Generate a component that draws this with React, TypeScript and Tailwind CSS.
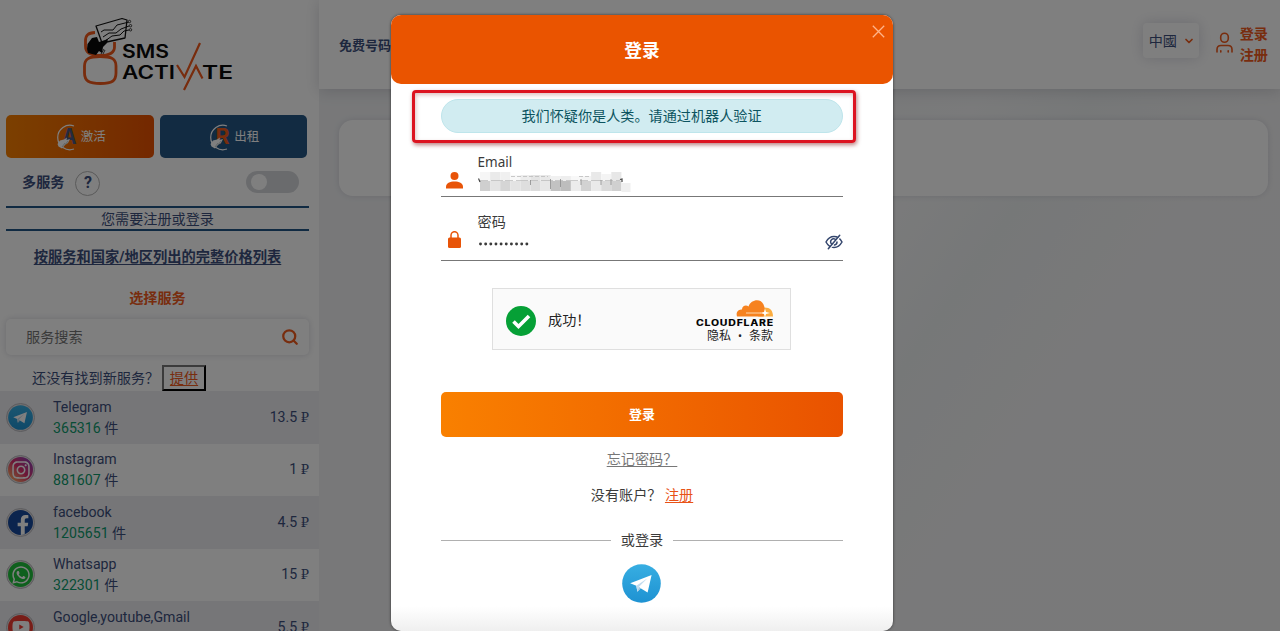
import React from "react";
import { ChevronDown, Search } from "lucide-react";
import { FaFacebookF, FaInstagram, FaWhatsapp, FaYoutube } from "react-icons/fa";

function PlaneBadge({ size }: { size: number }) {
  return (
    <svg width={size} height={size} viewBox="0 0 39 39" className="block shrink-0">
      <defs>
        <linearGradient id="plane-sky" x1="0" y1="0" x2="0" y2="1">
          <stop offset="0" stopColor="#37aee2" />
          <stop offset="1" stopColor="#1e92d2" />
        </linearGradient>
      </defs>
      <circle cx="19.5" cy="19.5" r="19.3" fill="url(#plane-sky)" />
      <path d="M8.2 19.2 29.6 11 25.6 28.6 18.6 24.2 15.4 27.8 14.3 21.8Z" fill="#fff" />
      <path d="M14.3 21.8 25.5 14.2 17 22.7 15.4 27.8Z" fill="#c3dcef" />
      <path d="M17 22.7 18.7 24.2 15.4 27.8Z" fill="#a3c6e0" />
    </svg>
  );
}

function Logo() {
  return (
    <svg width="152" height="76" viewBox="0 0 152 76" className="block" fontFamily="Inter, sans-serif">
      <g fill="none" stroke="#f0581a" strokeWidth="2.800">
        <path d="M13 15.500C6 16 3.500 18 3.500 24V29C3.500 36 8 38.500 18 38.500C28 38.500 32.500 36 32.500 30V25" />
        <path d="M18 39.500C7 39.500 2.500 42 2.500 49V56C2.500 64 7 66.500 18.500 66.500C30 66.500 34 64 34 56V49C34 42 30 39.500 18 39.500" />
      </g>
      <path d="M14 9 40 1.500 45 3 43 21 20 26Z" fill="#fff" stroke="#111" strokeWidth="1.300" strokeLinejoin="round" />
      <path d="M19 15 22 13 31 13 35 8 47 5M21 20 27 16 34 16 39 12 47 9M23 24 30 19 38 18 42 14 47 13" fill="none" stroke="#111" strokeWidth="1" />
      <g fill="#fff" stroke="#111" strokeWidth="0.800">
        <circle cx="47.500" cy="4.500" r="1.200" />
        <circle cx="48.500" cy="8.700" r="1.200" />
        <circle cx="48.500" cy="12.800" r="1.200" />
      </g>
      <path d="M5.500 27 10 21 15 20 17 25 26 22 25 26 21 30 20 36 17 34 14 38 6 36 5 32Z" fill="#080808" />
      <path d="M19 37 22 32M21 37 23 33" stroke="#111" strokeWidth="0.800" />
      <g fill="#0a0a0a" fontWeight="600" fontSize="18">
        <text x="40" y="40.500" textLength="47" lengthAdjust="spacingAndGlyphs">SMS</text>
        <text x="40" y="61.500" textLength="53" lengthAdjust="spacingAndGlyphs">ACTI</text>
        <text x="120" y="61.500" textLength="31" lengthAdjust="spacingAndGlyphs">TE</text>
      </g>
      <path d="M95 48 102.500 60 118 26M102 73 114 49 120.500 61.500" fill="none" stroke="#f0581a" strokeWidth="2.200" />
    </svg>
  );
}

function ModeMark({ letter, tone }: { letter: string; tone: string }) {
  return (
    <svg width="25" height="27" viewBox="0 0 25 27" className="shrink-0" fontFamily="Inter, sans-serif">
      <path d="M20 2A12.200 12.200 0 1 0 20 25" fill="none" stroke="#fff" strokeWidth="1.200" />
      <text x="8.500" y="19.500" fontSize="21" fontWeight="700" fill={tone} textLength="14" lengthAdjust="spacingAndGlyphs">
        {letter}
      </text>
      <path d="M3.500 20 6 16.500 10 15.500 13 13.500 12.500 16 16 15 14 19 11 21 8 24.500 4.500 22.500Z" fill="#fff" />
      <path d="M11 21 14 17M8 23 11 19" stroke="#9aa" strokeWidth="0.600" />
    </svg>
  );
}

type Service = { name: string; count?: string; price: string; icon: React.ReactNode };

const services: Service[] = [
  { name: "Telegram", count: "365316", price: "13.5", icon: <PlaneBadge size={25} /> },
  {
    name: "Instagram",
    count: "881607",
    price: "1",
    icon: (
      <span className="flex size-[25px] items-center justify-center rounded-full bg-linear-to-bl from-[#7a2fc0] via-[#dd2a6b] to-[#fec053]">
        <FaInstagram size={20} color="#fff" />
      </span>
    ),
  },
  {
    name: "facebook",
    count: "1205651",
    price: "4.5",
    icon: (
      <span className="flex size-[25px] items-end justify-center overflow-hidden rounded-full bg-[#17499c] pl-[4px]">
        <FaFacebookF size={20} color="#fff" />
      </span>
    ),
  },
  {
    name: "Whatsapp",
    count: "322301",
    price: "15",
    icon: (
      <span className="flex size-[25px] items-center justify-center rounded-full bg-[#1fc03c]">
        <FaWhatsapp size={20} color="#fff" />
      </span>
    ),
  },
  {
    name: "Google,youtube,Gmail",
    price: "5.5",
    icon: (
      <span className="flex size-[25px] items-center justify-center rounded-full bg-[#f03a30]">
        <FaYoutube size={18} color="#fff" />
      </span>
    ),
  },
];

function ServiceRow({ service, shaded }: { service: Service; shaded: boolean }) {
  return (
    <li className={`flex h-[52.500px] shrink-0 items-center pr-[10px] pl-[6px] ${shaded ? "bg-[#ececf1]" : "bg-white"}`}>
      <span className="flex size-[29px] items-center justify-center rounded-full border border-[#b9b9bf] bg-[#e3dede]">
        {service.icon}
      </span>
      <div className="ml-[18px] flex-1 pt-px leading-[21px]">
        <div className="h-[21px]">{service.name}</div>
        <div className="h-[21px]">
          {service.count && (
            <>
              <span className="text-[#0f9a6c]">{service.count}</span> 件
            </>
          )}
        </div>
      </div>
      <div>
        {service.price} <span className="font-['DejaVu_Serif',serif] text-[13px]">₽</span>
      </div>
    </li>
  );
}

function Sidebar() {
  return (
    <aside className="flex h-full w-[319px] shrink-0 flex-col overflow-hidden bg-white shadow-[2px_0_8px_rgba(60,60,100,0.18)]">
      <div className="flex h-[115px] shrink-0 pt-[17px] pl-[82px]">
        <Logo />
      </div>
      <div className="flex h-[43px] shrink-0 gap-[6px] px-[6px] text-[12.500px] text-white">
        <button className="flex w-[147.500px] items-center justify-center gap-[2px] rounded-[5px] bg-linear-to-r from-[#f77f00] to-[#e85000] pt-px">
          <ModeMark letter="A" tone="#4a5680" />
          激活
        </button>
        <button className="flex w-[147.500px] items-center justify-center gap-[2px] rounded-[5px] bg-[#245684] pt-px">
          <ModeMark letter="R" tone="#f05a1a" />
          出租
        </button>
      </div>
      <div className="flex h-[48px] shrink-0 items-center pr-[20px] pl-[22px]">
        <span className="font-bold">多服务</span>
        <span className="mt-[2px] ml-[11px] flex size-[25px] items-center justify-center rounded-full border border-[#b4b4b4] text-[16px] font-bold">
          ?
        </span>
        <span className="ml-auto flex h-[22px] w-[53px] items-center rounded-full bg-[#d5d7db] pl-[5px]">
          <span className="size-[16px] rounded-full bg-white" />
        </span>
      </div>
      <div className="mx-[6px] flex h-[25px] w-[303px] shrink-0 items-center justify-center border-y-2 border-[#205584]">
        您需要注册或登录
      </div>
      <a className="mt-[15.500px] flex h-[21px] w-[315px] shrink-0 items-center justify-center text-[14.250px] font-bold underline underline-offset-2">
        按服务和国家/地区列出的完整价格列表
      </a>
      <div className="mt-[20px] flex h-[21px] w-[315px] shrink-0 items-center justify-center font-bold text-[#f05a1c]">选择服务</div>
      <div className="mx-[6px] mt-[10.500px] flex h-[36px] w-[303px] shrink-0 items-center justify-between rounded-[5px] bg-white pr-[10px] pl-[20px] text-[#757575] shadow-[0_0_6px_rgba(60,60,90,0.2)]">
        服务搜索
        <Search size={18} color="#f05a1c" strokeWidth={3} />
      </div>
      <div className="mt-[10px] flex h-[26px] shrink-0 items-center pl-[32px]">
        <span className="w-[130px] whitespace-nowrap">还没有找到新服务？</span>
        <button className="h-[26px] w-[44px] border-2 border-t-[#767676] border-r-black border-b-black border-l-[#767676] bg-white text-[#f05a1c] underline underline-offset-2">
          提供
        </button>
      </div>
      <ul className="flex flex-col">
        {services.map((service, index) => (
          <ServiceRow key={service.name} service={service} shaded={index % 2 === 0} />
        ))}
      </ul>
    </aside>
  );
}

function MainArea() {
  return (
    <main className="flex flex-1 flex-col bg-[linear-gradient(125deg,#f0f1f3_0%,#f0f1f3_38%,#f4f5f6_52%,#edf0f1_60%,#f3f3f4_72%,#f2f2f3_100%)]">
      <header className="flex h-[89px] shrink-0 items-center bg-white pr-[12px] pl-[20px] shadow-[0_2px_14px_rgba(60,60,80,0.2)]">
        <span className="mt-[2px] text-[13px] font-bold">免费号码</span>
        <div className="mb-[8px] ml-auto flex h-[35px] w-[56px] items-center justify-between rounded-[4px] bg-white pr-[4px] pl-[6px] shadow-[0_0_14px_rgba(60,60,100,0.2)]">
          中國
          <ChevronDown size={12} color="#f05a1c" strokeWidth={3.5} />
        </div>
        <svg width="17" height="22" viewBox="0 0 17 22" className="mr-[7px] mb-[4px] ml-[17px]" fill="none" stroke="#f05a1c" strokeWidth="1.600" strokeLinecap="round">
          <rect x="4.700" y="1.200" width="7.600" height="9" rx="3.800" />
          <path d="M1 20V17.500Q1 13.500 5 13.500H12Q16 13.500 16 17.500V20M4.800 18.700V20M12.200 18.700V20" />
        </svg>
        <div className="pt-[1px] leading-[21px] font-bold text-[#f05a1c]">
          <div>登录</div>
          <div>注册</div>
        </div>
      </header>
      <section className="mt-[31px] mr-[12px] ml-[20px] h-[76px] rounded-[14px] bg-white shadow-[0_0_6px_rgba(60,60,100,0.15)]" />
    </main>
  );
}

const mosaicTop = ["#f6f6f6", "#eaeaea", "#f0f0f0", "#f8f8f8", "#ececec", "#e4e4e4", "#e8e8e8", "#f1f1f1", "#eeeeee", "#f8f8f8", "#f4f4f4", "#e9e9e9", "#f4f4f4", "#e7e7e7"];
const mosaicBottom = ["#cfcfcf", "#e4e4e4", "#d5d5d5", "#e3e3e3", "#dedede", "#dcdcdc", "#e7e7e7", "#c2c2c2", "#bdbdbd", "#ececec", "#d2d2d2", "#eaeaea", "#dadada", "#d0d0d0"];
const mosaicLift = [1, 1, 1, 4, 4, 4, 4, 5, 5, 5, 5, 1, 3, 1];

function MaskedEmail() {
  return (
    <svg width="154" height="22" viewBox="0 0 154 22" className="-mt-px block">
      {mosaicTop.map((tone, i) => (
        <rect key={`t${i}`} x={2 + i * 10.1} y={mosaicLift[i]} width="10.100" height={10 - mosaicLift[i]} fill={tone} />
      ))}
      {mosaicBottom.map((tone, i) => (
        <rect key={`b${i}`} x={2 + i * 10.1} y="10" width="10.100" height="10" fill={tone} />
      ))}
      <rect x="143.500" y="12" width="9" height="9" fill="#efefef" />
      <path d="M2 9.500H142" stroke="#b8b8b8" strokeWidth="0.700" strokeDasharray="8 3 12 2" />
      <path d="M33 5.500H70M101 5.500H113" stroke="#bbb" strokeWidth="0.800" strokeDasharray="4 2" />
      <path d="M52.500 9V14M72.500 8V18M82.500 8V16M103 8V14M123 9V14M133 8V14" stroke="#8a8a8a" strokeWidth="0.800" />
      <path d="M0.500 7.500 2 11M142 8.500 144 8 144 11" stroke="#444" strokeWidth="1.200" fill="none" />
    </svg>
  );
}

function EyeSlash() {
  return (
    <svg width="18" height="16" viewBox="0 0 18 16" fill="none" stroke="#34466d" strokeWidth="1.500" strokeLinecap="round">
      <path d="M1 8Q4 2.500 9 2.500T17 8Q14 13.500 9 13.500T1 8Z" />
      <path d="M11 6A3 3 0 1 0 6.800 10.200" />
      <path d="M4.300 15.300 15.600 2" stroke="#fff" strokeWidth="1.400" strokeLinecap="butt" />
      <path d="M3.300 14.800 14.700 1.200M9.500 11Q12 10.500 12 8" />
    </svg>
  );
}

function Turnstile() {
  return (
    <div className="flex h-[62px] w-[299px] items-center border border-[#dfdfdf] bg-[#fafafa] pr-[15px] pl-[13px] text-[#232323]">
      <svg width="30" height="30" viewBox="0 0 30 30" className="mt-[3px] shrink-0">
        <circle cx="15" cy="15" r="15" fill="#06a036" />
        <path d="M7.500 15.500 12.500 20.500 23 10" fill="none" stroke="#fff" strokeWidth="3.600" />
      </svg>
      <span className="mt-[2px] ml-[12px]">成功！</span>
      <div className="ml-auto flex flex-col items-end pt-[5px]">
        <svg width="79" height="29" viewBox="0 0 79 29" className="block" fontFamily="Inter, sans-serif">
          <path d="M68 8.500C74 8.300 77 11.500 77 17.500H62Z" fill="#fbad41" />
          <path d="M41 17.500C39.500 12.500 43 10.500 46 10.500C46 7 50 5.500 52.500 7.500C55 0 65 -1 67.500 5.500C69 8.500 69 12 67.500 17.500Z" fill="#f6821f" />
          <path d="M50 14H65" stroke="#fdd7ae" strokeWidth="1" />
          <path d="M69 9.500 70 13 74 14 70 15 69 18 68 15 64 14 68 13Z" fill="#fff" />
          <text x="0" y="26.500" fontSize="8.400" fontWeight="800" fill="#050505" textLength="78" lengthAdjust="spacingAndGlyphs" letterSpacing="0.600">
            CLOUDFLARE
          </text>
        </svg>
        <div className="flex h-[16px] w-[68px] items-center justify-between pr-[2px] text-[12px] leading-[16px]">
          <span>隐私</span>
          <span>•</span>
          <span>条款</span>
        </div>
      </div>
    </div>
  );
}

function LoginDialog() {
  return (
    <div className="mt-[14.500px] ml-[391px] flex h-[616px] w-[502px] flex-col items-center rounded-[10px] bg-[linear-gradient(#fff_96%,#efefef_100%)] text-[#3b3b3b] shadow-[0_0_3px_rgba(0,0,0,0.6)]">
      <div className="relative flex h-[69px] w-full shrink-0 items-center justify-center rounded-[10px] bg-[#ea5400] pt-[3px] text-[17.700px] font-bold text-white">
        登录
        <svg width="13" height="13" viewBox="0 0 13 13" className="absolute top-[10px] right-[8.500px]">
          <path d="M0.800 0.800 12.200 12.200M12.200 0.800 0.800 12.200" stroke="#ffb489" strokeWidth="1.300" />
        </svg>
      </div>
      <div className="mt-[6.500px] mr-[17px] flex h-[53px] w-[444px] shrink-0 rounded-[4px] border-3 border-[#dc1320] pt-[6px] pl-[26px] shadow-[1px_2px_4px_rgba(120,0,0,0.5),inset_1px_2px_4px_rgba(120,0,0,0.25)]">
        <div className="flex h-[34px] w-[402px] shrink-0 items-center justify-center rounded-full border border-[#bee5eb] bg-[#d1ecf1] text-[#0c5460]">
          我们怀疑你是人类。请通过机器人验证
        </div>
      </div>
      <div className="flex w-[402px] flex-1 flex-col items-center">
        <div className="flex h-[54px] w-full shrink-0 border-b border-[#777]">
          <svg width="17" height="17" viewBox="0 0 17 17" className="mt-[29px] ml-[5px] shrink-0" fill="#e85408">
            <circle cx="8.500" cy="4" r="4" />
            <path d="M0 16.500V15C0 11 4 9.500 8.500 9.500S17 11 17 15V16.500Z" />
          </svg>
          <div className="ml-[14.500px] pt-[9px]">
            <div className="h-[20px] font-['Noto_Sans',sans-serif] text-[13.500px] leading-[20px]">Email</div>
            <MaskedEmail />
          </div>
        </div>
        <div className="flex h-[64px] w-full shrink-0 border-b border-[#777]">
          <svg width="13" height="17" viewBox="0 0 13 17" className="mt-[34px] ml-[6.500px] shrink-0">
            <path d="M3 8V4.200A3.500 3.500 0 0 1 10 4.200V8" fill="none" stroke="#e85408" strokeWidth="1.500" />
            <rect x="0" y="6.500" width="13" height="10.500" rx="1.500" fill="#e85408" />
          </svg>
          <div className="ml-[17px] pt-[15px]">
            <div className="h-[21px] leading-[21px]">密码</div>
            <svg width="52" height="21" viewBox="0 0 52 21" fill="#3a3a3a" className="block">
              {Array.from({ length: 10 }, (_, i) => (
                <circle key={i} cx={2.5 + i * 5.15} cy="11" r="1.450" />
              ))}
            </svg>
          </div>
          <div className="mt-[37px] ml-auto">
            <EyeSlash />
          </div>
        </div>
        <div className="mt-[27px] mr-px">
          <Turnstile />
        </div>
        <button className="mt-[42px] h-[45px] w-full shrink-0 rounded-[5px] bg-linear-to-r from-[#f98000] to-[#e95200] pt-px text-[13px] font-bold text-white">
          登录
        </button>
        <a className="mt-[11.500px] h-[21px] leading-[21px] text-[#777] underline underline-offset-2">忘记密码？</a>
        <div className="mt-[15px] h-[21px] leading-[21px]">
          没有账户？ <a className="text-[#e85217] underline underline-offset-2">注册</a>
        </div>
        <div className="mt-[24px] flex h-[21px] w-full items-center gap-[10px]">
          <span className="h-px flex-1 bg-[#b0b0b0]" />
          <span>或登录</span>
          <span className="h-px flex-1 bg-[#b0b0b0]" />
        </div>
        <div className="mt-[13px] mr-px">
          <PlaneBadge size={39} />
        </div>
      </div>
    </div>
  );
}

export default function App() {
  return (
    <div className="relative h-[631px] w-full overflow-hidden font-['Roboto','Noto_Sans_CJK_SC',sans-serif] text-[14.130px] leading-[20px] text-[#3d4f7c]">
      <div className="flex h-full">
        <Sidebar />
        <MainArea />
      </div>
      <div className="absolute inset-0 bg-black/50">
        <LoginDialog />
      </div>
    </div>
  );
}
